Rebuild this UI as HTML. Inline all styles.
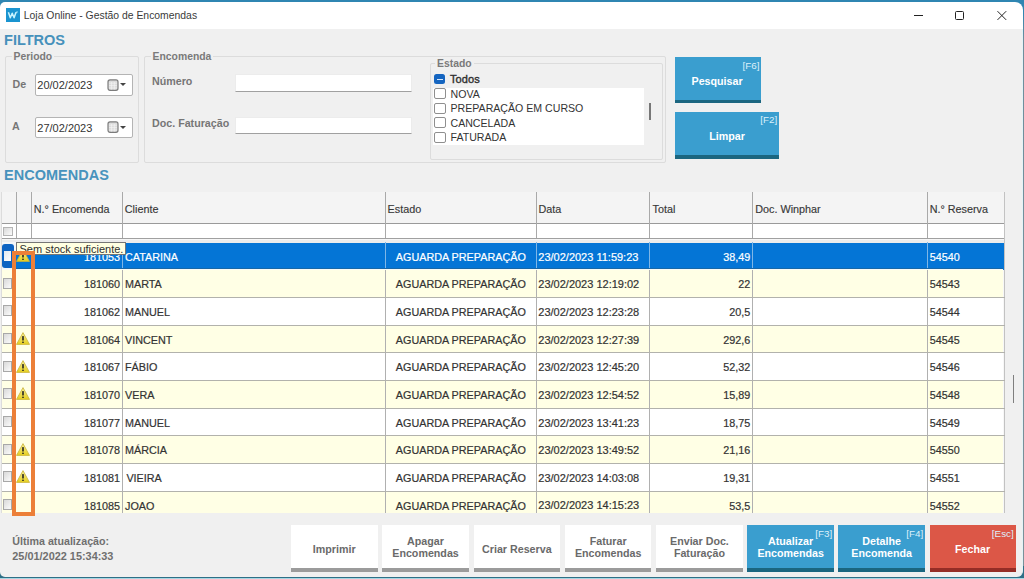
<!DOCTYPE html>
<html><head><meta charset="utf-8"><style>
*{box-sizing:border-box;margin:0;padding:0}
html,body{width:1024px;height:579px;overflow:hidden;background:#f0f0f0}
body{position:relative;font-family:"Liberation Sans",sans-serif;color:#333}
.a{position:absolute}
.t{position:absolute;white-space:nowrap;line-height:1}
.lbl{color:#767676;font-weight:bold;font-size:10.7px}
.grp{position:absolute;border:1px solid #dcdcdc;border-radius:2px}
.legend{position:absolute;background:#f0f0f0;padding:0 2px;color:#7a7a7a;font-weight:bold;font-size:10.4px;line-height:1;white-space:nowrap}
.inp{position:absolute;background:#fff;border:1px solid #ececec;border-bottom:1.2px solid #a0a0a0}
.cb{position:absolute;width:11.6px;height:11px;border:1px solid #8f8f8f;border-radius:2px;background:#fff}
.gcb{position:absolute;width:9px;height:11px;border:1px solid #a8a8a8;background:linear-gradient(135deg,#d9d9d9,#fbfbfb)}
.btnb{position:absolute;background:#3a9ecf;border-bottom:4px solid #1b6680;color:#fff;font-weight:bold;font-size:10.7px;text-align:center}
.btnw{position:absolute;background:#fff;border-bottom:4px solid #9b9b9b;color:#6a6a6a;font-weight:bold;font-size:10.7px;text-align:center;line-height:11.8px}
.key{position:absolute;right:1.8px;top:3.6px;font-size:9.9px;font-weight:normal;color:#dcf0fa;line-height:1}
.gt{position:absolute;white-space:nowrap;font-size:10.8px;line-height:1;color:#333;-webkit-text-stroke:0.2px currentColor}
.gh{-webkit-text-stroke:0}
</style></head><body>

<div class="a" style="left:0;top:0;width:1024px;height:2px;background:#2f86b2"></div>
<div class="a" style="left:0;top:0;width:20px;height:8px;background:#2f86b2"></div><div class="a" style="left:1004px;top:0;width:20px;height:14px;background:#2f86b2"></div><div class="a" style="left:0;top:2px;width:1023px;height:27px;background:#fff;border-top-right-radius:8px;border-top-left-radius:5px"></div>
<div class="a" style="left:1022px;top:29px;width:1px;height:548px;background:#e4f2f6"></div>
<div class="a" style="left:1023px;top:0;width:1px;height:579px;background:linear-gradient(#2f86b2 0,#2f86b2 12px,#6f8e9c 40px,#7b9098 100%)"></div>
<div class="a" style="left:0;top:568px;width:8px;height:11px;background:#2e6f86"></div><div class="a" style="left:0;top:566px;width:10px;height:10.5px;background:#f0f0f0;border-bottom-left-radius:5px"></div>
<div class="a" style="left:1012px;top:566px;width:12px;height:13px;background:#2e6f86"></div><div class="a" style="left:1010px;top:564px;width:13px;height:12.5px;background:#f0f0f0;border-bottom-right-radius:6px;border-right:1px solid #e4f2f6"></div>
<div class="a" style="left:0;top:576.5px;width:1024px;height:1px;background:#2e6f86"></div>
<div class="a" style="left:0;top:577.5px;width:1024px;height:1.5px;background:#a8d6e2"></div>
<div class="a" style="left:6px;top:8px;width:14px;height:14px;background:#1a94d0"></div>
<svg class="a" style="left:6px;top:8px" width="14" height="14" viewBox="0 0 14 14"><path d="M2.4 4.3 L4.3 9.7 L6.2 5.2 L8.1 9.7 L10 4.3" fill="none" stroke="#c8f4ff" stroke-width="1.5" stroke-linejoin="round"/><path d="M11.2 3.3 L10.6 5.2" stroke="#c8f4ff" stroke-width="1.1"/></svg>
<div class="t" style="left:23.8px;top:10.6px;font-size:10.4px;color:#3a3a3a">Loja Online - Gestão de Encomendas</div>
<div class="a" style="left:914px;top:14.7px;width:9px;height:1px;background:#222"></div>
<div class="a" style="left:955px;top:11px;width:9px;height:9px;border:1px solid #222;border-radius:1.5px"></div>
<svg class="a" style="left:996px;top:10px" width="12" height="12" viewBox="0 0 12 12"><path d="M1.5 1.2 L10.2 9.9 M10.2 1.2 L1.5 9.9" stroke="#222" stroke-width="1"/></svg>
<div class="t" style="left:4.1px;top:33px;font-size:14.5px;font-weight:bold;color:#4691bb">FILTROS</div>
<div class="grp" style="left:5.3px;top:56.4px;width:134px;height:106.6px"></div>
<div class="legend" style="left:11.5px;top:52.3px">Periodo</div>
<div class="t lbl" style="left:12.5px;top:79px">De</div>
<div class="t lbl" style="left:12px;top:121px">A</div>
<div class="inp" style="left:35.2px;top:74px;width:97.4px;height:21.8px;border:1px solid #b4b4b4;border-radius:2px"></div>
<div class="t" style="left:37.3px;top:80.2px;font-size:11px;color:#333">20/02/2023</div>
<svg class="a" style="left:107.2px;top:78.5px" width="12" height="12" viewBox="0 0 12 12"><rect x="1" y="0.9" width="10" height="10.4" rx="2" fill="#dcdcdc" stroke="#7c7c7c" stroke-width="1.2"/><path d="M2 4.2H10M2 6.6H10M2 9H10M4.6 3V10.5M7.3 3V10.5" stroke="#f4f4f4" stroke-width="0.7"/></svg>
<div class="a" style="left:120.3px;top:83px;width:0;height:0;border-left:3px solid transparent;border-right:3px solid transparent;border-top:3.6px solid #444"></div>
<div class="inp" style="left:35.2px;top:116.5px;width:97.4px;height:21.8px;border:1px solid #b4b4b4;border-radius:2px"></div>
<div class="t" style="left:37.3px;top:122.7px;font-size:11px;color:#333">27/02/2023</div>
<svg class="a" style="left:107.2px;top:121.0px" width="12" height="12" viewBox="0 0 12 12"><rect x="1" y="0.9" width="10" height="10.4" rx="2" fill="#dcdcdc" stroke="#7c7c7c" stroke-width="1.2"/><path d="M2 4.2H10M2 6.6H10M2 9H10M4.6 3V10.5M7.3 3V10.5" stroke="#f4f4f4" stroke-width="0.7"/></svg>
<div class="a" style="left:120.3px;top:125.5px;width:0;height:0;border-left:3px solid transparent;border-right:3px solid transparent;border-top:3.6px solid #444"></div>
<div class="grp" style="left:144.4px;top:56.2px;width:522px;height:106.8px"></div>
<div class="legend" style="left:150.5px;top:52px">Encomenda</div>
<div class="t lbl" style="left:152px;top:75.8px">Número</div>
<div class="t lbl" style="left:152px;top:117.6px">Doc. Faturação</div>
<div class="inp" style="left:234.6px;top:74.3px;width:177.3px;height:17.8px"></div>
<div class="inp" style="left:234.6px;top:116.8px;width:177.3px;height:17.2px"></div>
<div class="grp" style="left:429.6px;top:62.7px;width:233px;height:97px"></div>
<div class="legend" style="left:435px;top:59.2px">Estado</div>
<div class="a" style="left:432.7px;top:87.6px;width:211px;height:57px;background:#fff"></div>
<div class="a" style="left:434px;top:73.6px;width:11.4px;height:10.8px;background:#1565c0;border-radius:2.5px"></div>
<div class="a" style="left:437px;top:78.6px;width:5.5px;height:1px;background:#d8e8fb"></div>
<div class="t" style="left:450px;top:73.6px;font-size:11px;color:#2e2e2e;-webkit-text-stroke:0.35px #2e2e2e;letter-spacing:0.1px">Todos</div>
<div class="cb" style="left:434.2px;top:88.10px"></div>
<div class="t" style="left:450.5px;top:88.90px;font-size:10.6px;color:#333">NOVA</div>
<div class="cb" style="left:434.2px;top:102.57px"></div>
<div class="t" style="left:450.5px;top:103.37px;font-size:10.6px;color:#333">PREPARAÇÃO EM CURSO</div>
<div class="cb" style="left:434.2px;top:117.04px"></div>
<div class="t" style="left:450.5px;top:117.84px;font-size:10.6px;color:#333">CANCELADA</div>
<div class="cb" style="left:434.2px;top:131.51px"></div>
<div class="t" style="left:450.5px;top:132.31px;font-size:10.6px;color:#333">FATURADA</div>
<div class="a" style="left:649.2px;top:102.8px;width:1.8px;height:17px;background:#777"></div>
<div class="btnb" style="left:674.9px;top:57px;width:86.4px;height:46px;border-bottom-width:3px"><span class="t" style="left:-1px;width:100%;top:18.8px;text-align:center">Pesquisar</span><span class="key">[F6]</span></div>
<div class="btnb" style="left:674.9px;top:111.5px;width:104.2px;height:47.6px"><span class="t" style="left:0;width:100%;top:19.4px;text-align:center">Limpar</span><span class="key">[F2]</span></div>
<div class="t" style="left:4.1px;top:168px;font-size:14.5px;font-weight:bold;color:#4893bd">ENCOMENDAS</div>
<div class="a" style="left:2px;top:192px;width:1002.6px;height:321.3px;background:#f7f7f7;overflow:hidden" id="grid">
<div class="a" style="left:0;top:0;width:100%;height:31.5px;background:#f4f4f4"></div>
<div class="a" style="left:0;top:31.3px;width:100%;height:1.1px;background:#9a9a9a"></div>
<div class="a" style="left:0;top:32.3px;width:100%;height:14px;background:#fff"></div>
<div class="a" style="left:0;top:45.8px;width:100%;height:1.2px;background:#a0a0a0"></div>
<div class="a" style="left:0;top:47.5px;width:100%;height:3px;background:#ececec"></div>
<div class="gcb" style="left:1.1px;top:34.5px;width:10px;height:9.8px;border-color:#b4b4b4"></div>
<div class="gt" style="left:31.80px;top:11.5px;font-size:10.8px;color:#383838;-webkit-text-stroke:0.15px #383838">N.° Encomenda</div>
<div class="gt" style="left:122.80px;top:11.5px;font-size:10.8px;color:#383838;-webkit-text-stroke:0.15px #383838">Cliente</div>
<div class="gt" style="left:385.60px;top:11.5px;font-size:10.8px;color:#383838;-webkit-text-stroke:0.15px #383838">Estado</div>
<div class="gt" style="left:536.40px;top:11.5px;font-size:10.8px;color:#383838;-webkit-text-stroke:0.15px #383838">Data</div>
<div class="gt" style="left:650.60px;top:11.5px;font-size:10.8px;color:#383838;-webkit-text-stroke:0.15px #383838">Total</div>
<div class="gt" style="left:753.30px;top:11.5px;font-size:10.8px;color:#383838;-webkit-text-stroke:0.15px #383838">Doc. Winphar</div>
<div class="gt" style="left:927.70px;top:11.5px;font-size:10.8px;color:#383838;-webkit-text-stroke:0.15px #383838">N.° Reserva</div>
<div class="a" style="left:13.50px;top:0;width:1px;height:46px;background:#a9a9a9"></div>
<div class="a" style="left:28.50px;top:0;width:1px;height:46px;background:#a9a9a9"></div>
<div class="a" style="left:120.00px;top:0;width:1px;height:46px;background:#a9a9a9"></div>
<div class="a" style="left:382.70px;top:0;width:1px;height:46px;background:#a9a9a9"></div>
<div class="a" style="left:533.90px;top:0;width:1px;height:46px;background:#a9a9a9"></div>
<div class="a" style="left:647.40px;top:0;width:1px;height:46px;background:#a9a9a9"></div>
<div class="a" style="left:750.00px;top:0;width:1px;height:46px;background:#a9a9a9"></div>
<div class="a" style="left:924.70px;top:0;width:1px;height:46px;background:#a9a9a9"></div>
<div class="a" style="left:1001.60px;top:0;width:1px;height:100%;background:#c2c2c2"></div>
<div class="a" style="left:0;top:50.20px;width:14px;height:27.65px;background:#f4f6f8"></div>
<div class="a" style="left:14.00px;top:50.80px;width:988.00px;height:27.05px;background:#0475d6"></div>
<div class="a" style="left:28.50px;top:50.20px;width:1px;height:27.65px;background:#7fb6e6"></div>
<div class="a" style="left:120.00px;top:50.20px;width:1px;height:27.65px;background:#7fb6e6"></div>
<div class="a" style="left:382.70px;top:50.20px;width:1px;height:27.65px;background:#7fb6e6"></div>
<div class="a" style="left:533.90px;top:50.20px;width:1px;height:27.65px;background:#7fb6e6"></div>
<div class="a" style="left:647.40px;top:50.20px;width:1px;height:27.65px;background:#7fb6e6"></div>
<div class="a" style="left:750.00px;top:50.20px;width:1px;height:27.65px;background:#7fb6e6"></div>
<div class="a" style="left:924.70px;top:50.20px;width:1px;height:27.65px;background:#7fb6e6"></div>
<div class="gcb" style="left:1.1px;top:58.12px"></div>
<svg width="14" height="13" viewBox="0 0 14 13" style="position:absolute;left:14.40px;top:57.22px"><defs><linearGradient id="wg" x1="0" y1="0" x2="0" y2="1"><stop offset="0" stop-color="#f7ef9a"/><stop offset="1" stop-color="#e6cf1e"/></linearGradient></defs><path d="M7 0.6 L13.5 12.4 L0.5 12.4 Z" fill="url(#wg)" stroke="#c9b23a" stroke-width="0.8" stroke-linejoin="round"/><rect x="6.2" y="4" width="1.6" height="4.6" rx="0.6" fill="#222"/><rect x="6.2" y="9.5" width="1.6" height="1.6" rx="0.6" fill="#222"/></svg>
<div class="gt" style="right:884.70px;top:59.72px;color:#fff">181053</div>
<div class="gt" style="left:123.00px;top:59.72px;color:#fff">CATARINA</div>
<div class="gt" style="left:383.20px;width:151.2px;text-align:center;top:59.72px;color:#fff">AGUARDA PREPARAÇÃO</div>
<div class="gt" style="left:536.30px;top:59.62px;font-size:11px;color:#fff">23/02/2023 11:59:23</div>
<div class="gt" style="right:254.30px;top:59.72px;color:#fff">38,49</div>
<div class="gt" style="left:927.70px;top:59.72px;color:#fff">54540</div>
<div class="a" style="left:0.00px;top:77.85px;width:1001.4px;height:27.65px;background:#ffffe5"></div>
<div class="a" style="left:28.50px;top:77.85px;width:1px;height:27.65px;background:#b0b0b0"></div>
<div class="a" style="left:120.00px;top:77.85px;width:1px;height:27.65px;background:#b0b0b0"></div>
<div class="a" style="left:382.70px;top:77.85px;width:1px;height:27.65px;background:#b0b0b0"></div>
<div class="a" style="left:533.90px;top:77.85px;width:1px;height:27.65px;background:#b0b0b0"></div>
<div class="a" style="left:647.40px;top:77.85px;width:1px;height:27.65px;background:#b0b0b0"></div>
<div class="a" style="left:750.00px;top:77.85px;width:1px;height:27.65px;background:#b0b0b0"></div>
<div class="a" style="left:924.70px;top:77.85px;width:1px;height:27.65px;background:#b0b0b0"></div>
<div class="gcb" style="left:1.1px;top:85.77px"></div>
<div class="gt" style="right:884.70px;top:87.37px;color:#333">181060</div>
<div class="gt" style="left:123.00px;top:87.37px;color:#333">MARTA</div>
<div class="gt" style="left:383.20px;width:151.2px;text-align:center;top:87.37px;color:#333">AGUARDA PREPARAÇÃO</div>
<div class="gt" style="left:536.30px;top:87.27px;font-size:11px;color:#333">23/02/2023 12:19:02</div>
<div class="gt" style="right:254.30px;top:87.37px;color:#333">22</div>
<div class="gt" style="left:927.70px;top:87.37px;color:#333">54543</div>
<div class="a" style="left:0.00px;top:105.50px;width:1001.4px;height:27.65px;background:#ffffff"></div>
<div class="a" style="left:28.50px;top:105.50px;width:1px;height:27.65px;background:#b0b0b0"></div>
<div class="a" style="left:120.00px;top:105.50px;width:1px;height:27.65px;background:#b0b0b0"></div>
<div class="a" style="left:382.70px;top:105.50px;width:1px;height:27.65px;background:#b0b0b0"></div>
<div class="a" style="left:533.90px;top:105.50px;width:1px;height:27.65px;background:#b0b0b0"></div>
<div class="a" style="left:647.40px;top:105.50px;width:1px;height:27.65px;background:#b0b0b0"></div>
<div class="a" style="left:750.00px;top:105.50px;width:1px;height:27.65px;background:#b0b0b0"></div>
<div class="a" style="left:924.70px;top:105.50px;width:1px;height:27.65px;background:#b0b0b0"></div>
<div class="gcb" style="left:1.1px;top:113.42px"></div>
<div class="gt" style="right:884.70px;top:115.02px;color:#333">181062</div>
<div class="gt" style="left:123.00px;top:115.02px;color:#333">MANUEL</div>
<div class="gt" style="left:383.20px;width:151.2px;text-align:center;top:115.02px;color:#333">AGUARDA PREPARAÇÃO</div>
<div class="gt" style="left:536.30px;top:114.92px;font-size:11px;color:#333">23/02/2023 12:23:28</div>
<div class="gt" style="right:254.30px;top:115.02px;color:#333">20,5</div>
<div class="gt" style="left:927.70px;top:115.02px;color:#333">54544</div>
<div class="a" style="left:0.00px;top:133.15px;width:1001.4px;height:27.65px;background:#ffffe5"></div>
<div class="a" style="left:28.50px;top:133.15px;width:1px;height:27.65px;background:#b0b0b0"></div>
<div class="a" style="left:120.00px;top:133.15px;width:1px;height:27.65px;background:#b0b0b0"></div>
<div class="a" style="left:382.70px;top:133.15px;width:1px;height:27.65px;background:#b0b0b0"></div>
<div class="a" style="left:533.90px;top:133.15px;width:1px;height:27.65px;background:#b0b0b0"></div>
<div class="a" style="left:647.40px;top:133.15px;width:1px;height:27.65px;background:#b0b0b0"></div>
<div class="a" style="left:750.00px;top:133.15px;width:1px;height:27.65px;background:#b0b0b0"></div>
<div class="a" style="left:924.70px;top:133.15px;width:1px;height:27.65px;background:#b0b0b0"></div>
<div class="gcb" style="left:1.1px;top:141.07px"></div>
<svg width="14" height="13" viewBox="0 0 14 13" style="position:absolute;left:14.40px;top:140.17px"><defs><linearGradient id="wg" x1="0" y1="0" x2="0" y2="1"><stop offset="0" stop-color="#f7ef9a"/><stop offset="1" stop-color="#e6cf1e"/></linearGradient></defs><path d="M7 0.6 L13.5 12.4 L0.5 12.4 Z" fill="url(#wg)" stroke="#c9b23a" stroke-width="0.8" stroke-linejoin="round"/><rect x="6.2" y="4" width="1.6" height="4.6" rx="0.6" fill="#222"/><rect x="6.2" y="9.5" width="1.6" height="1.6" rx="0.6" fill="#222"/></svg>
<div class="gt" style="right:884.70px;top:142.67px;color:#333">181064</div>
<div class="gt" style="left:123.00px;top:142.67px;color:#333">VINCENT</div>
<div class="gt" style="left:383.20px;width:151.2px;text-align:center;top:142.67px;color:#333">AGUARDA PREPARAÇÃO</div>
<div class="gt" style="left:536.30px;top:142.57px;font-size:11px;color:#333">23/02/2023 12:27:39</div>
<div class="gt" style="right:254.30px;top:142.67px;color:#333">292,6</div>
<div class="gt" style="left:927.70px;top:142.67px;color:#333">54545</div>
<div class="a" style="left:0.00px;top:160.80px;width:1001.4px;height:27.65px;background:#ffffff"></div>
<div class="a" style="left:28.50px;top:160.80px;width:1px;height:27.65px;background:#b0b0b0"></div>
<div class="a" style="left:120.00px;top:160.80px;width:1px;height:27.65px;background:#b0b0b0"></div>
<div class="a" style="left:382.70px;top:160.80px;width:1px;height:27.65px;background:#b0b0b0"></div>
<div class="a" style="left:533.90px;top:160.80px;width:1px;height:27.65px;background:#b0b0b0"></div>
<div class="a" style="left:647.40px;top:160.80px;width:1px;height:27.65px;background:#b0b0b0"></div>
<div class="a" style="left:750.00px;top:160.80px;width:1px;height:27.65px;background:#b0b0b0"></div>
<div class="a" style="left:924.70px;top:160.80px;width:1px;height:27.65px;background:#b0b0b0"></div>
<div class="gcb" style="left:1.1px;top:168.72px"></div>
<svg width="14" height="13" viewBox="0 0 14 13" style="position:absolute;left:14.40px;top:167.82px"><defs><linearGradient id="wg" x1="0" y1="0" x2="0" y2="1"><stop offset="0" stop-color="#f7ef9a"/><stop offset="1" stop-color="#e6cf1e"/></linearGradient></defs><path d="M7 0.6 L13.5 12.4 L0.5 12.4 Z" fill="url(#wg)" stroke="#c9b23a" stroke-width="0.8" stroke-linejoin="round"/><rect x="6.2" y="4" width="1.6" height="4.6" rx="0.6" fill="#222"/><rect x="6.2" y="9.5" width="1.6" height="1.6" rx="0.6" fill="#222"/></svg>
<div class="gt" style="right:884.70px;top:170.32px;color:#333">181067</div>
<div class="gt" style="left:123.00px;top:170.32px;color:#333">FÁBIO</div>
<div class="gt" style="left:383.20px;width:151.2px;text-align:center;top:170.32px;color:#333">AGUARDA PREPARAÇÃO</div>
<div class="gt" style="left:536.30px;top:170.22px;font-size:11px;color:#333">23/02/2023 12:45:20</div>
<div class="gt" style="right:254.30px;top:170.32px;color:#333">52,32</div>
<div class="gt" style="left:927.70px;top:170.32px;color:#333">54546</div>
<div class="a" style="left:0.00px;top:188.45px;width:1001.4px;height:27.65px;background:#ffffe5"></div>
<div class="a" style="left:28.50px;top:188.45px;width:1px;height:27.65px;background:#b0b0b0"></div>
<div class="a" style="left:120.00px;top:188.45px;width:1px;height:27.65px;background:#b0b0b0"></div>
<div class="a" style="left:382.70px;top:188.45px;width:1px;height:27.65px;background:#b0b0b0"></div>
<div class="a" style="left:533.90px;top:188.45px;width:1px;height:27.65px;background:#b0b0b0"></div>
<div class="a" style="left:647.40px;top:188.45px;width:1px;height:27.65px;background:#b0b0b0"></div>
<div class="a" style="left:750.00px;top:188.45px;width:1px;height:27.65px;background:#b0b0b0"></div>
<div class="a" style="left:924.70px;top:188.45px;width:1px;height:27.65px;background:#b0b0b0"></div>
<div class="gcb" style="left:1.1px;top:196.37px"></div>
<svg width="14" height="13" viewBox="0 0 14 13" style="position:absolute;left:14.40px;top:195.47px"><defs><linearGradient id="wg" x1="0" y1="0" x2="0" y2="1"><stop offset="0" stop-color="#f7ef9a"/><stop offset="1" stop-color="#e6cf1e"/></linearGradient></defs><path d="M7 0.6 L13.5 12.4 L0.5 12.4 Z" fill="url(#wg)" stroke="#c9b23a" stroke-width="0.8" stroke-linejoin="round"/><rect x="6.2" y="4" width="1.6" height="4.6" rx="0.6" fill="#222"/><rect x="6.2" y="9.5" width="1.6" height="1.6" rx="0.6" fill="#222"/></svg>
<div class="gt" style="right:884.70px;top:197.97px;color:#333">181070</div>
<div class="gt" style="left:123.00px;top:197.97px;color:#333">VERA</div>
<div class="gt" style="left:383.20px;width:151.2px;text-align:center;top:197.97px;color:#333">AGUARDA PREPARAÇÃO</div>
<div class="gt" style="left:536.30px;top:197.87px;font-size:11px;color:#333">23/02/2023 12:54:52</div>
<div class="gt" style="right:254.30px;top:197.97px;color:#333">15,89</div>
<div class="gt" style="left:927.70px;top:197.97px;color:#333">54548</div>
<div class="a" style="left:0.00px;top:216.10px;width:1001.4px;height:27.65px;background:#ffffff"></div>
<div class="a" style="left:28.50px;top:216.10px;width:1px;height:27.65px;background:#b0b0b0"></div>
<div class="a" style="left:120.00px;top:216.10px;width:1px;height:27.65px;background:#b0b0b0"></div>
<div class="a" style="left:382.70px;top:216.10px;width:1px;height:27.65px;background:#b0b0b0"></div>
<div class="a" style="left:533.90px;top:216.10px;width:1px;height:27.65px;background:#b0b0b0"></div>
<div class="a" style="left:647.40px;top:216.10px;width:1px;height:27.65px;background:#b0b0b0"></div>
<div class="a" style="left:750.00px;top:216.10px;width:1px;height:27.65px;background:#b0b0b0"></div>
<div class="a" style="left:924.70px;top:216.10px;width:1px;height:27.65px;background:#b0b0b0"></div>
<div class="gcb" style="left:1.1px;top:224.02px"></div>
<div class="gt" style="right:884.70px;top:225.62px;color:#333">181077</div>
<div class="gt" style="left:123.00px;top:225.62px;color:#333">MANUEL</div>
<div class="gt" style="left:383.20px;width:151.2px;text-align:center;top:225.62px;color:#333">AGUARDA PREPARAÇÃO</div>
<div class="gt" style="left:536.30px;top:225.52px;font-size:11px;color:#333">23/02/2023 13:41:23</div>
<div class="gt" style="right:254.30px;top:225.62px;color:#333">18,75</div>
<div class="gt" style="left:927.70px;top:225.62px;color:#333">54549</div>
<div class="a" style="left:0.00px;top:243.75px;width:1001.4px;height:27.65px;background:#ffffe5"></div>
<div class="a" style="left:28.50px;top:243.75px;width:1px;height:27.65px;background:#b0b0b0"></div>
<div class="a" style="left:120.00px;top:243.75px;width:1px;height:27.65px;background:#b0b0b0"></div>
<div class="a" style="left:382.70px;top:243.75px;width:1px;height:27.65px;background:#b0b0b0"></div>
<div class="a" style="left:533.90px;top:243.75px;width:1px;height:27.65px;background:#b0b0b0"></div>
<div class="a" style="left:647.40px;top:243.75px;width:1px;height:27.65px;background:#b0b0b0"></div>
<div class="a" style="left:750.00px;top:243.75px;width:1px;height:27.65px;background:#b0b0b0"></div>
<div class="a" style="left:924.70px;top:243.75px;width:1px;height:27.65px;background:#b0b0b0"></div>
<div class="gcb" style="left:1.1px;top:251.67px"></div>
<svg width="14" height="13" viewBox="0 0 14 13" style="position:absolute;left:14.40px;top:250.77px"><defs><linearGradient id="wg" x1="0" y1="0" x2="0" y2="1"><stop offset="0" stop-color="#f7ef9a"/><stop offset="1" stop-color="#e6cf1e"/></linearGradient></defs><path d="M7 0.6 L13.5 12.4 L0.5 12.4 Z" fill="url(#wg)" stroke="#c9b23a" stroke-width="0.8" stroke-linejoin="round"/><rect x="6.2" y="4" width="1.6" height="4.6" rx="0.6" fill="#222"/><rect x="6.2" y="9.5" width="1.6" height="1.6" rx="0.6" fill="#222"/></svg>
<div class="gt" style="right:884.70px;top:253.27px;color:#333">181078</div>
<div class="gt" style="left:123.00px;top:253.27px;color:#333">MÁRCIA</div>
<div class="gt" style="left:383.20px;width:151.2px;text-align:center;top:253.27px;color:#333">AGUARDA PREPARAÇÃO</div>
<div class="gt" style="left:536.30px;top:253.17px;font-size:11px;color:#333">23/02/2023 13:49:52</div>
<div class="gt" style="right:254.30px;top:253.27px;color:#333">21,16</div>
<div class="gt" style="left:927.70px;top:253.27px;color:#333">54550</div>
<div class="a" style="left:0.00px;top:271.40px;width:1001.4px;height:27.65px;background:#ffffff"></div>
<div class="a" style="left:28.50px;top:271.40px;width:1px;height:27.65px;background:#b0b0b0"></div>
<div class="a" style="left:120.00px;top:271.40px;width:1px;height:27.65px;background:#b0b0b0"></div>
<div class="a" style="left:382.70px;top:271.40px;width:1px;height:27.65px;background:#b0b0b0"></div>
<div class="a" style="left:533.90px;top:271.40px;width:1px;height:27.65px;background:#b0b0b0"></div>
<div class="a" style="left:647.40px;top:271.40px;width:1px;height:27.65px;background:#b0b0b0"></div>
<div class="a" style="left:750.00px;top:271.40px;width:1px;height:27.65px;background:#b0b0b0"></div>
<div class="a" style="left:924.70px;top:271.40px;width:1px;height:27.65px;background:#b0b0b0"></div>
<div class="gcb" style="left:1.1px;top:279.32px"></div>
<svg width="14" height="13" viewBox="0 0 14 13" style="position:absolute;left:14.40px;top:278.42px"><defs><linearGradient id="wg" x1="0" y1="0" x2="0" y2="1"><stop offset="0" stop-color="#f7ef9a"/><stop offset="1" stop-color="#e6cf1e"/></linearGradient></defs><path d="M7 0.6 L13.5 12.4 L0.5 12.4 Z" fill="url(#wg)" stroke="#c9b23a" stroke-width="0.8" stroke-linejoin="round"/><rect x="6.2" y="4" width="1.6" height="4.6" rx="0.6" fill="#222"/><rect x="6.2" y="9.5" width="1.6" height="1.6" rx="0.6" fill="#222"/></svg>
<div class="gt" style="right:884.70px;top:280.92px;color:#333">181081</div>
<div class="gt" style="left:124.40px;top:280.92px;color:#333">VIEIRA</div>
<div class="gt" style="left:383.20px;width:151.2px;text-align:center;top:280.92px;color:#333">AGUARDA PREPARAÇÃO</div>
<div class="gt" style="left:536.30px;top:280.82px;font-size:11px;color:#333">23/02/2023 14:03:08</div>
<div class="gt" style="right:254.30px;top:280.92px;color:#333">19,31</div>
<div class="gt" style="left:927.70px;top:280.92px;color:#333">54551</div>
<div class="a" style="left:0.00px;top:299.05px;width:1001.4px;height:27.65px;background:#ffffe5"></div>
<div class="a" style="left:28.50px;top:299.05px;width:1px;height:27.65px;background:#b0b0b0"></div>
<div class="a" style="left:120.00px;top:299.05px;width:1px;height:27.65px;background:#b0b0b0"></div>
<div class="a" style="left:382.70px;top:299.05px;width:1px;height:27.65px;background:#b0b0b0"></div>
<div class="a" style="left:533.90px;top:299.05px;width:1px;height:27.65px;background:#b0b0b0"></div>
<div class="a" style="left:647.40px;top:299.05px;width:1px;height:27.65px;background:#b0b0b0"></div>
<div class="a" style="left:750.00px;top:299.05px;width:1px;height:27.65px;background:#b0b0b0"></div>
<div class="a" style="left:924.70px;top:299.05px;width:1px;height:27.65px;background:#b0b0b0"></div>
<div class="gcb" style="left:1.1px;top:306.97px"></div>
<div class="gt" style="right:884.70px;top:308.57px;color:#333">181085</div>
<div class="gt" style="left:123.00px;top:308.57px;color:#333">JOAO</div>
<div class="gt" style="left:383.20px;width:151.2px;text-align:center;top:308.57px;color:#333">AGUARDA PREPARAÇÃO</div>
<div class="gt" style="left:536.30px;top:308.47px;font-size:11px;color:#333">23/02/2023 14:15:23</div>
<div class="gt" style="right:254.30px;top:308.57px;color:#333">53,5</div>
<div class="gt" style="left:927.70px;top:308.57px;color:#333">54552</div>
<div class="a" style="left:14px;top:76px;width:987.40px;height:1px;background:#1767a8"></div>
<div class="a" style="left:0;top:77px;width:1001.40px;height:1px;background:#f8fbf6"></div>
<div class="a" style="left:0;top:105px;width:1002.6px;height:1px;background:#b2b2ac"></div>
<div class="a" style="left:0;top:133px;width:1002.6px;height:1px;background:#b2b2ac"></div>
<div class="a" style="left:0;top:160px;width:1002.6px;height:1px;background:#b2b2ac"></div>
<div class="a" style="left:0;top:188px;width:1002.6px;height:1px;background:#b2b2ac"></div>
<div class="a" style="left:0;top:216px;width:1002.6px;height:1px;background:#b2b2ac"></div>
<div class="a" style="left:0;top:243px;width:1002.6px;height:1px;background:#b2b2ac"></div>
<div class="a" style="left:0;top:271px;width:1002.6px;height:1px;background:#b2b2ac"></div>
<div class="a" style="left:0;top:299px;width:1002.6px;height:1px;background:#b2b2ac"></div>
</div>
<div class="a" style="left:1px;top:192px;width:1px;height:321px;background:#dcdcdc"></div>
<div class="a" style="left:2.1px;top:243.6px;width:12.3px;height:24.9px;background:#0c63c2;border-radius:3px"></div>
<div class="a" style="left:3.8px;top:250.9px;width:7.2px;height:10px;background:linear-gradient(135deg,#e2e9f0,#fdfdfd)"></div>
<div class="a" style="left:15.9px;top:242.1px;width:109.8px;height:13px;background:#ffffe1;border:1px solid #767676;overflow:hidden"><span class="t" style="left:2.6px;top:0.8px;font-size:11px;color:#2e2e2e">Sem stock suficiente.</span></div>
<div class="a" style="left:12px;top:251px;width:23px;height:265px;border:4px solid #ec7f38"></div>
<div class="a" style="left:1012.6px;top:375px;width:1.8px;height:28px;background:#7f7f7f"></div>
<div class="t" style="left:12.3px;top:536.3px;font-size:10.7px;font-weight:bold;color:#6f6f6f">Última atualização:</div>
<div class="t" style="left:12.3px;top:551.2px;font-size:10.9px;font-weight:bold;color:#6f6f6f">25/01/2022 15:34:33</div>
<div class="btnw" style="left:290.9px;top:525px;width:86.70px;height:47px;"><span class="t" style="left:0;width:100%;top:19.3px;text-align:center">Imprimir</span></div>
<div class="btnw" style="left:382.2px;top:525px;width:86.70px;height:47px;"><span class="t" style="left:0;width:100%;top:11.3px;text-align:center">Apagar</span><span class="t" style="left:0;width:100%;top:23.2px;text-align:center">Encomendas</span></div>
<div class="btnw" style="left:473.5px;top:525px;width:86.70px;height:47px;"><span class="t" style="left:0;width:100%;top:19.3px;text-align:center">Criar Reserva</span></div>
<div class="btnw" style="left:564.8px;top:525px;width:86.70px;height:47px;"><span class="t" style="left:0;width:100%;top:11.3px;text-align:center">Faturar</span><span class="t" style="left:0;width:100%;top:23.2px;text-align:center">Encomendas</span></div>
<div class="btnw" style="left:656.1px;top:525px;width:86.70px;height:47px;"><span class="t" style="left:0;width:100%;top:11.3px;text-align:center">Enviar Doc.</span><span class="t" style="left:0;width:100%;top:23.2px;text-align:center">Faturação</span></div>
<div class="btnb" style="left:747.3px;top:525px;width:86.70px;height:47px;border-bottom-width:4px;line-height:11.8px"><span class="t" style="left:0;width:100%;top:11.3px;text-align:center">Atualizar</span><span class="t" style="left:0;width:100%;top:23.2px;text-align:center">Encomendas</span><span class="key">[F3]</span></div>
<div class="btnb" style="left:838.3px;top:525px;width:86.70px;height:47px;border-bottom-width:4px;line-height:11.8px"><span class="t" style="left:0;width:100%;top:11.3px;text-align:center">Detalhe</span><span class="t" style="left:0;width:100%;top:23.2px;text-align:center">Encomenda</span><span class="key">[F4]</span></div>
<div class="btnb" style="left:929.5px;top:525px;width:86.10px;height:47px;background:#dc5747;border-bottom:4px solid #952d26;line-height:11.8px"><span class="t" style="left:0;width:100%;top:19.3px;text-align:center">Fechar</span><span class="key">[Esc]</span></div>
</body></html>
